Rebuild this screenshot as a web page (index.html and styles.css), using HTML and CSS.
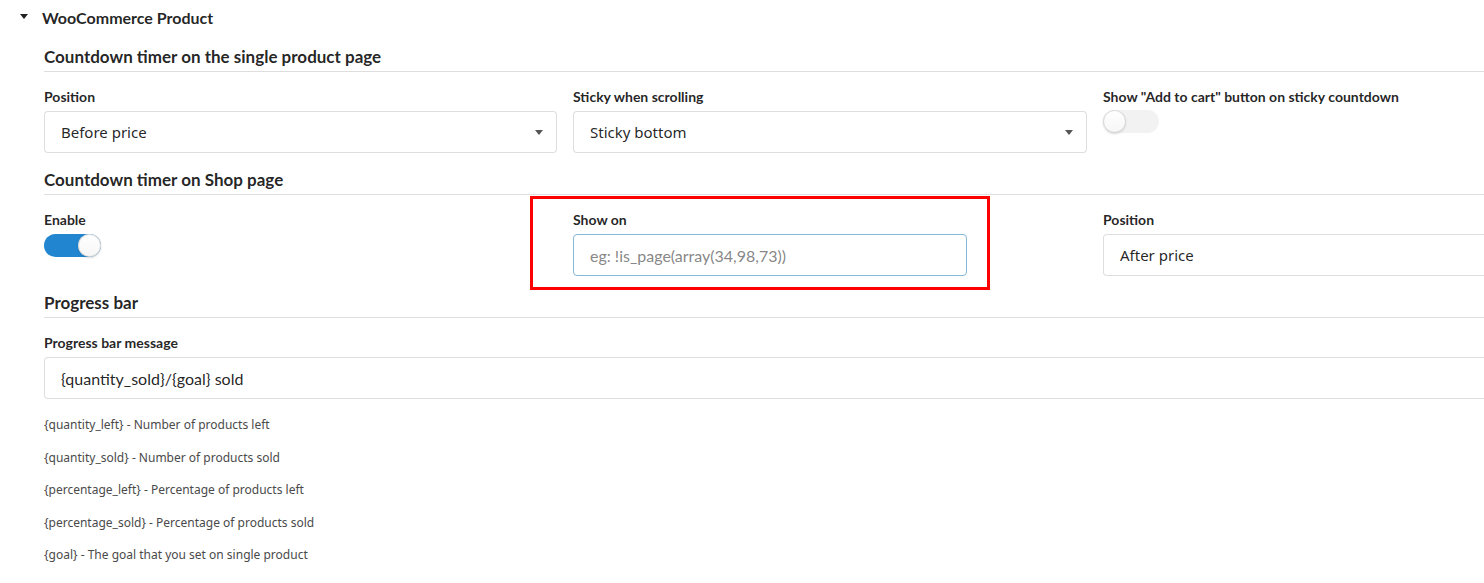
FILE: index.html
```html
<!DOCTYPE html>
<html lang="en">
<head>
    <meta charset="UTF-8">
    <title>WooCommerce Product settings</title>
    <link rel="stylesheet" href="styles.css">
</head>
<body>
    <div class="accordion">
        <div class="title"><span class="dropdown-icon"></span>WooCommerce Product</div>

        <div class="content">
            <h4 class="divider-header">Countdown timer on the single product page</h4>
            <div class="fields three">
                <div class="field">
                    <label>Position</label>
                    <div class="select">Before price<span class="caret"></span></div>
                </div>
                <div class="field">
                    <label>Sticky when scrolling</label>
                    <div class="select">Sticky bottom<span class="caret"></span></div>
                </div>
                <div class="field">
                    <label>Show "Add to cart" button on sticky countdown</label>
                    <div class="toggle"><span class="knob"></span></div>
                </div>
            </div>

            <h4 class="divider-header">Countdown timer on Shop page</h4>
            <div class="fields three">
                <div class="field">
                    <label>Enable</label>
                    <div class="toggle checked"><span class="knob"></span></div>
                </div>
                <div class="field highlighted">
                    <label>Show on</label>
                    <input class="text-input short focus" type="text" placeholder="eg: !is_page(array(34,98,73))">
                </div>
                <div class="field">
                    <label>Position</label>
                    <div class="select">After price<span class="caret"></span></div>
                </div>
            </div>

            <h4 class="divider-header">Progress bar</h4>
            <div class="field">
                <label>Progress bar message</label>
                <input class="text-input" type="text" value="{quantity_sold}/{goal} sold">
            </div>
            <div class="help">
                <p>{quantity_left} - Number of products left</p>
                <p>{quantity_sold} - Number of products sold</p>
                <p>{percentage_left} - Percentage of products left</p>
                <p>{percentage_sold} - Percentage of products sold</p>
                <p>{goal} - The goal that you set on single product</p>
            </div>
        </div>
    </div>
</body>
</html>
```

FILE: styles.css
```css
html, body {
    margin: 0;
    padding: 0;
    overflow: hidden;
    background: #fff;
}
body {
    font-family: Lato, 'Helvetica Neue', Arial, sans-serif;
    font-size: 14px;
    color: rgba(0, 0, 0, .87);
}
.accordion {
    width: 1620px;
}
.title {
    display: flex;
    align-items: center;
    height: 34px;
    padding-left: 20px;
    font-size: 16px;
    font-weight: 700;
    color: rgba(0, 0, 0, .87);
}
.dropdown-icon {
    width: 0;
    height: 0;
    border-left: 4px solid transparent;
    border-right: 4px solid transparent;
    border-top: 5px solid #222;
    margin-right: 14px;
    margin-top: -2px;
}
.content {
    padding-left: 44px;
}
.divider-header {
    margin: 0;
    padding: 17px 0 4px;
    font-size: 17px;
    font-weight: 700;
    color: rgba(0, 0, 0, .87);
    border-bottom: 1px solid #dededf;
    line-height: 20px;
}
.divider-header:first-child {
    padding-top: 13px;
}
.fields.three {
    display: grid;
    grid-template-columns: 513px 514px 513px;
    column-gap: 16px;
}
.field {
    padding-top: 17px;
}
.field label {
    display: block;
    font-size: 14px;
    font-weight: 700;
    line-height: 16px;
    margin-bottom: 6px;
    color: rgba(0, 0, 0, .87);
}
.select,
.text-input {
    box-sizing: border-box;
    display: block;
    width: 100%;
    height: 42px;
    border: 1px solid rgba(34, 36, 38, .15);
    border-radius: 4px;
    background: #fff;
    font-family: 'Noto Sans', 'Open Sans', sans-serif;
    font-size: 15px;
    color: rgba(0, 0, 0, .87);
    padding: 0 16px;
    line-height: 40px;
    position: relative;
}
.caret {
    position: absolute;
    right: 13px;
    top: 18px;
    width: 0;
    height: 0;
    border-left: 4px solid transparent;
    border-right: 4px solid transparent;
    border-top: 5px solid #555;
}
.text-input {
    font-family: Lato, sans-serif;
    font-size: 16px;
    outline: none;
}
.text-input.short {
    width: 394px;
}
.text-input.focus {
    border-color: #85b7d9;
}
.text-input::placeholder {
    color: rgba(115, 115, 115, .87);
}
.toggle {
    position: relative;
    width: 56px;
    height: 23px;
    border-radius: 12px;
    background: rgba(0, 0, 0, .05);
    margin-top: -1px;
}
.toggle .knob {
    position: absolute;
    top: 0;
    left: 0;
    width: 23px;
    height: 23px;
    border-radius: 50%;
    background: linear-gradient(#fff, #f6f6f6);
    box-shadow: 0 1px 2px 0 rgba(34, 36, 38, .15), 0 0 0 1px rgba(34, 36, 38, .15) inset;
}
.toggle.checked {
    background: #2185d0;
    width: 57px;
    margin-top: 1px;
}
.toggle.checked .knob {
    left: auto;
    right: 0;
}
/* red outline drawn round the "Show on" field */
.highlighted {
    position: relative;
}
.highlighted::before {
    content: "";
    position: absolute;
    left: -43px;
    right: 97px;
    top: 1px;
    bottom: -14px;
    border: 3px solid #f00;
    pointer-events: none;
}
.help {
    padding-top: 10px;
}
.help p {
    margin: 0;
    font-family: 'Noto Sans', 'Open Sans', sans-serif;
    font-size: 12px;
    line-height: 32.5px;
    color: #4a4a4a;
}
```
